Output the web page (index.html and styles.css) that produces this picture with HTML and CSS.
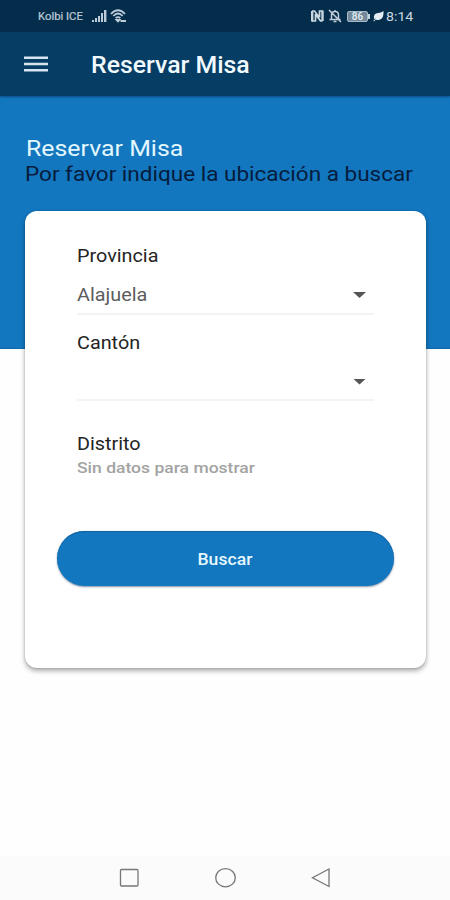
FILE: index.html
```html
<!DOCTYPE html>
<html lang="es">
<head>
<meta charset="utf-8">
<title>Reservar Misa</title>
<link rel="stylesheet" href="styles.css">
</head>
<body>
<div class="status">
  <span class="carrier">Kolbi ICE</span>
  <svg class="signal" width="15" height="13" viewBox="0 0 15 13" fill="#bccbd8"><path d="M0 10h2v2H0zM3 8h2v4H3zM6 6h2v6H6zM9 3h2v9H9zM12 0h2.400v12H12z"/></svg>
  <svg class="wifi" width="17" height="14" viewBox="0 0 17 14" fill="none" stroke="#bccbd8" stroke-width="1.800"><path d="M1 5Q8 -2.500 15 5M3.300 7Q8 2 12.700 7M5.700 9.200Q8 7 10.300 9.200"/><path d="M6.500 10.800l1.500 1.700 1.500-1.700zM10.500 12h5.500" fill="#bccbd8"/></svg>
  <span class="spacer"></span>
  <svg class="nfc" width="15" height="14" viewBox="0 0 15 14" fill="none" stroke="#c9d5df"><path d="M2.200 12.500V2M12.500 12V1.500" stroke-width="2.400"/><path d="M2 2H4.500L9.500 8.500M5.500 5V12H2M12.500 11.800H10.500L5.500 5.500M9.500 8.500V2H12.500" stroke-width="1.700"/></svg>
  <svg class="bell" width="14" height="14" viewBox="0 0 14 14" fill="none" stroke="#c1ced9" stroke-width="1.500"><path d="M3.500 10V6Q3.500 2.500 7 2.500T10.500 6V10M1.500 10.500h11M5.500 12.500h3M7 1v2M1 1l12 12"/></svg>
  <span class="battery">86</span>
  <svg class="leaf" width="11" height="12" viewBox="0 0 11 12"><path d="M1 9Q0 3.500 5 3Q8 3 10.500 1Q11 8 7 9.500Q4.500 10.500 2.800 9.500L1 11.500L.3 10.800L3 8.500z" fill="#e3edf3"/></svg>
  <span class="clock">8:14</span>
</div>
<header class="bar">
  <svg class="menu" width="24" height="16" viewBox="0 0 24 16" fill="#d8e5f0"><path d="M0 .5h24v2.600H0zM0 6.700h24v2.600H0zM0 12.900h24v2.600H0z"/></svg>
  <h1 class="title">Reservar Misa</h1>
</header>
<main class="page">
  <h2 class="heading">Reservar Misa</h2>
  <p class="sub">Por favor indique la ubicación a buscar</p>
  <section class="card">
    <div class="field">
      <label class="label">Provincia</label>
      <div class="select"><span class="value">Alajuela</span><i class="caret"></i></div>
    </div>
    <div class="field second">
      <label class="label">Cantón</label>
      <div class="select"><span class="value"></span><i class="caret"></i></div>
    </div>
    <div class="field third">
      <label class="label">Distrito</label>
      <p class="empty">Sin datos para mostrar</p>
    </div>
    <button class="button"><span class="button-text">Buscar</span></button>
  </section>
</main>
<nav class="nav">
  <svg width="22" height="22" viewBox="0 0 22 22"><rect x="2.500" y="2.500" width="17.500" height="16.500" rx="1"/></svg>
  <svg width="22" height="22" viewBox="0 0 22 22"><ellipse cx="11.500" cy="10.700" rx="9.800" ry="9.100"/></svg>
  <svg width="22" height="22" viewBox="0 0 22 22"><path d="M19 2v17.500L2.500 10.700z"/></svg>
</nav>
</body>
</html>
```
FILE: styles.css
```css
* { box-sizing: border-box; }
body {
  margin: 0;
  width: 450px;
  height: 900px;
  display: flex;
  flex-direction: column;
  overflow: hidden;
  background: #fefefe;
  font-family: Roboto, "Liberation Sans", sans-serif;
}
h1, h2, p { margin: 0; }
.status {
  height: 32px;
  flex: none;
  display: flex;
  align-items: center;
  padding: 0 37px 0 38px;
  background: #042d4b;
  color: #bccbd8;
}
.carrier { width: 54px; font-size: 10px; white-space: nowrap; transform: scaleX(1.13); transform-origin: left; -webkit-text-stroke: .2px; }
.wifi { margin-left: 3px; }
.spacer { flex: 1; }
.bell { margin-left: 3px; }
.battery {
  position: relative;
  width: 21px;
  height: 11px;
  margin: 0 5px 0 5px;
  border: 1px solid #a9bbc9;
  border-radius: 2px;
  background: #73899b;
  color: #e4edf4;
  font-size: 10px;
  font-weight: 500;
  line-height: 9px;
  text-align: center;
}
.battery::after { content: ""; position: absolute; right: -3px; top: 2px; width: 2px; height: 5px; background: #c5d2dc; }
.clock { width: 27px; margin-left: 2px; font-size: 13.500px; color: #cbd7e1; white-space: nowrap; transform: scaleX(1.05); transform-origin: left; }
.bar {
  height: 64px;
  flex: none;
  display: flex;
  align-items: center;
  padding: 0 0 0 24px;
  background: #063d65;
  box-shadow: 0 1px 2px rgba(0, 30, 60, .5);
  z-index: 1;
}
.title { margin: 3px 0 0 43px; font-size: 23px; font-weight: 500; line-height: 28px; color: #f0f9fe; transform: scaleX(1.08); transform-origin: left; }
.menu { flex: none; }
.page {
  flex: 1;
  padding: 40px 24px 0 25px;
  background: linear-gradient(#1277bf 0 252px, #0e68aa 252px 253px, #fefefe 253px);
}
.heading { width: max-content; margin-left: 1px; font-size: 22px; font-weight: 400; line-height: 25px; color: #e2f7fe; transform: scaleX(1.13); transform-origin: left; }
.sub { width: max-content; margin-top: 1px; font-size: 20px; line-height: 24px; color: #061c3c; transform: scaleX(1.126); transform-origin: left; }
.card {
  height: 457px;
  margin-top: 25px;
  padding: 33px 31px 0 32px;
  display: flex;
  flex-direction: column;
  border-radius: 12px;
  background: #fff;
  box-shadow: 0 3px 5px rgba(0, 0, 0, .32), 0 0 2px rgba(0, 0, 0, .22);
}
.field { width: 297px; margin-left: 20px; }
.second { margin-top: 16px; }
.third { margin-top: 31px; }
.label { display: block; width: max-content; font-size: 18px; line-height: 24px; color: #242424; transform: scaleX(1.1); transform-origin: left; }
.select {
  height: 47px;
  padding: 6px 8px 0 0;
  display: flex;
  align-items: center;
  justify-content: space-between;
  border-bottom: 2px solid #f4f4f4;
}
.second .select { height: 46px; }
.value { margin-top: 3px; font-size: 18px; line-height: 24px; color: #5c5c5c; transform: scaleX(1.1); transform-origin: left; }
.caret { width: 13px; height: 6px; margin-top: 3px; background: #555; clip-path: polygon(0 0, 100% 0, 50% 100%); }
.empty { width: max-content; font-size: 15.500px; font-weight: 500; line-height: 24px; color: #a3a3a3; transform: scaleX(1.13); transform-origin: left; }
.button {
  height: 55px;
  margin-top: 51px;
  width: 337px;
  padding: 2px 1px 0 0;
  border: 0;
  border-radius: 28px;
  background: #1277bf;
  box-shadow: 0 1px 2px rgba(0, 40, 80, .5), inset 0 1px #0d61a0;
  color: #e6f8fd;
  font: 500 16px/24px Roboto, "Liberation Sans", sans-serif;
}
.button-text { display: inline-block; transform: scaleX(1.1); }
.nav {
  height: 44px;
  flex: none;
  display: flex;
  align-items: center;
  justify-content: center;
  gap: 74px;
  background: #fbfbfb;
  fill: none;
  stroke: #777;
  stroke-width: 1.300;
}
```
